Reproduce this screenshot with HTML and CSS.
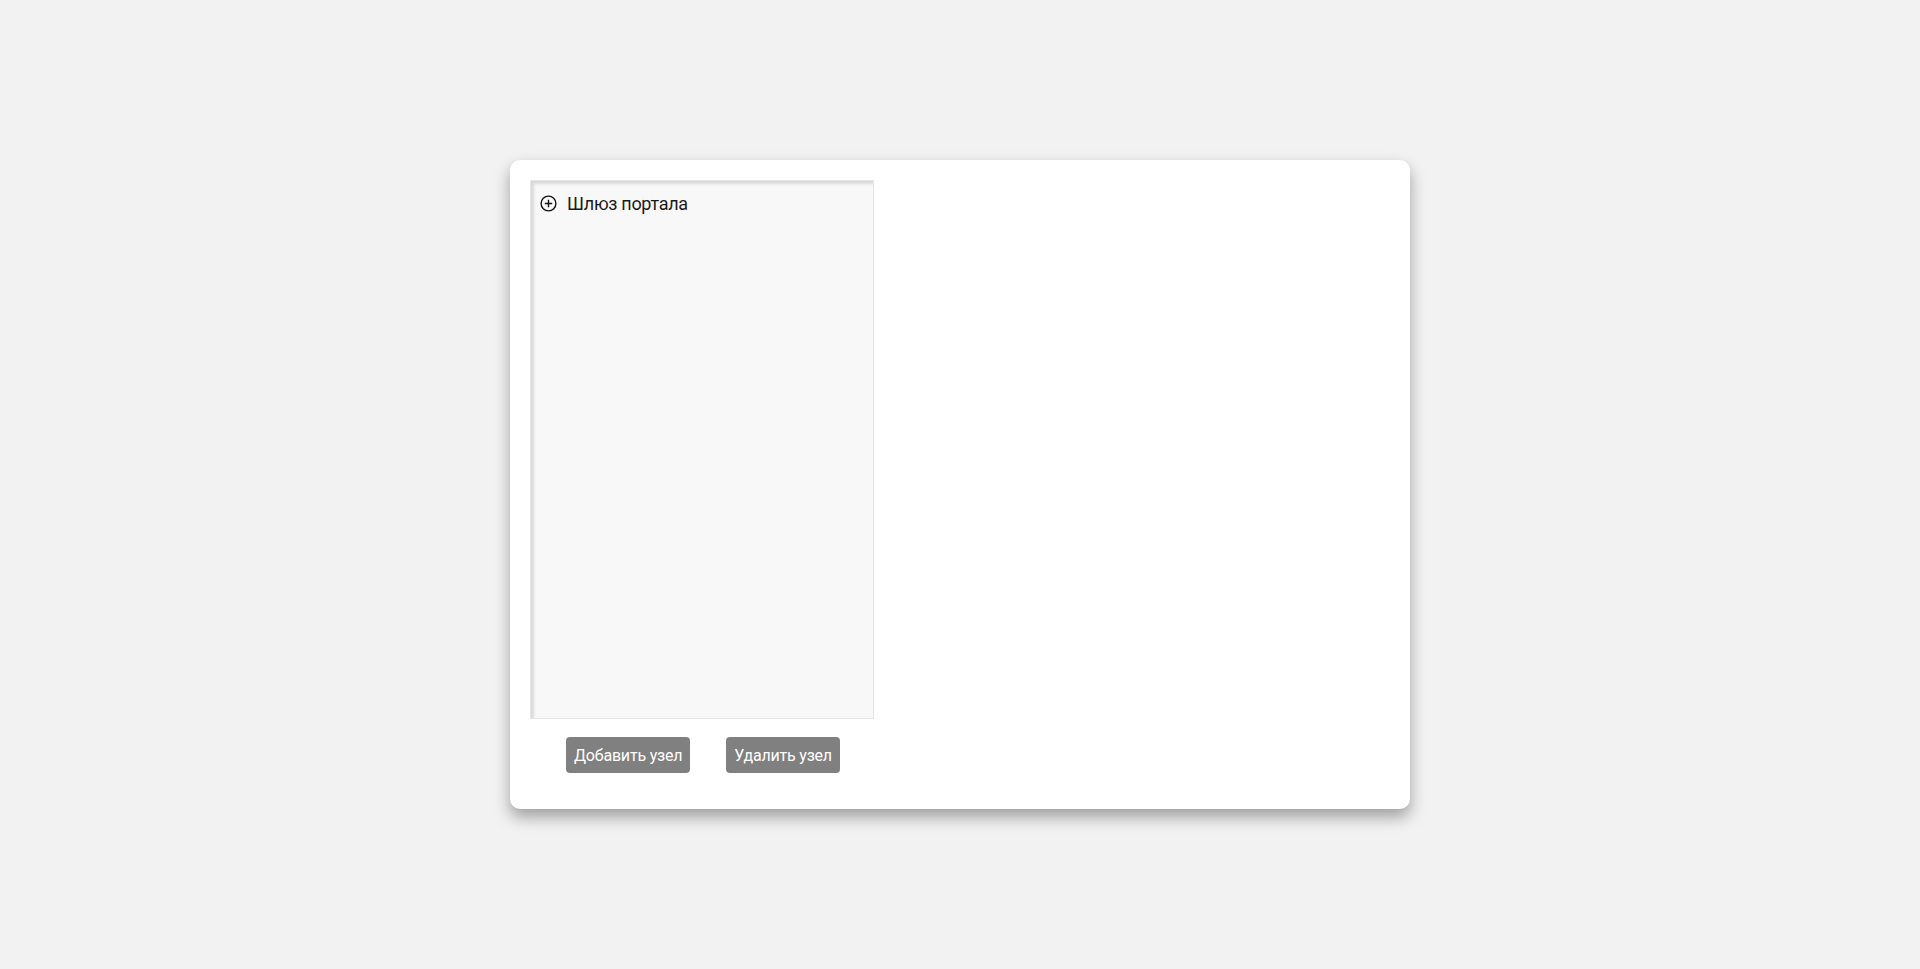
FILE: index.html
```html
<!DOCTYPE html>
<html lang="ru">
<head>
<meta charset="utf-8">
<title>Дерево узлов</title>
<link rel="stylesheet" href="styles.css">
</head>
<body>
<div class="page">
  <div class="card">
    <div class="tree">
      <div class="node">
        <svg class="node-icon" width="17" height="17" viewBox="0 0 17 17" aria-hidden="true">
          <circle cx="8.5" cy="8.5" r="7.4" fill="none" stroke="#111" stroke-width="1.4"/>
          <path d="M8.5 4.8v7.4M4.8 8.5h7.4" stroke="#111" stroke-width="1.4" fill="none"/>
        </svg>
        <span class="node-label">Шлюз портала</span>
      </div>
    </div>
    <div class="actions">
      <button class="btn">Добавить узел</button>
      <button class="btn">Удалить узел</button>
    </div>
  </div>
</div>
</body>
</html>
```

FILE: styles.css
```css
html, body {
  margin: 0;
  padding: 0;
  height: 100%;
}
body {
  background: #f2f2f2;
  font-family: Roboto, "Liberation Sans", sans-serif;
}
.page {
  height: 100%;
  display: flex;
  align-items: center;
  justify-content: center;
}
.card {
  width: 900px;
  box-sizing: border-box;
  padding: 20px 20px 36px 20px;
  background: #fff;
  border-radius: 10px;
  box-shadow: 0 8px 16px rgba(0, 0, 0, 0.35);
}
.tree {
  width: 344px;
  height: 539px;
  box-sizing: border-box;
  background: #f8f8f8;
  border: 1px solid #e6e6e6;
  box-shadow: inset 3px 3px 3px rgba(0, 0, 0, 0.12);
  padding: 12px 9px;
}
.node {
  display: flex;
  align-items: center;
  gap: 10px;
}
.node-icon {
  flex: none;
}
.node-label {
  font-size: 18px;
  color: #1a1a1a;
  letter-spacing: -0.3px;
}
.actions {
  display: flex;
  gap: 36px;
  margin-top: 18px;
  padding-left: 36px;
}
.btn {
  height: 36px;
  padding: 0 8px;
  border: none;
  border-radius: 4px;
  background: #808080;
  color: #fff;
  font-family: Roboto, "Liberation Sans", sans-serif;
  font-size: 16px;
  letter-spacing: -0.2px;
}
```
